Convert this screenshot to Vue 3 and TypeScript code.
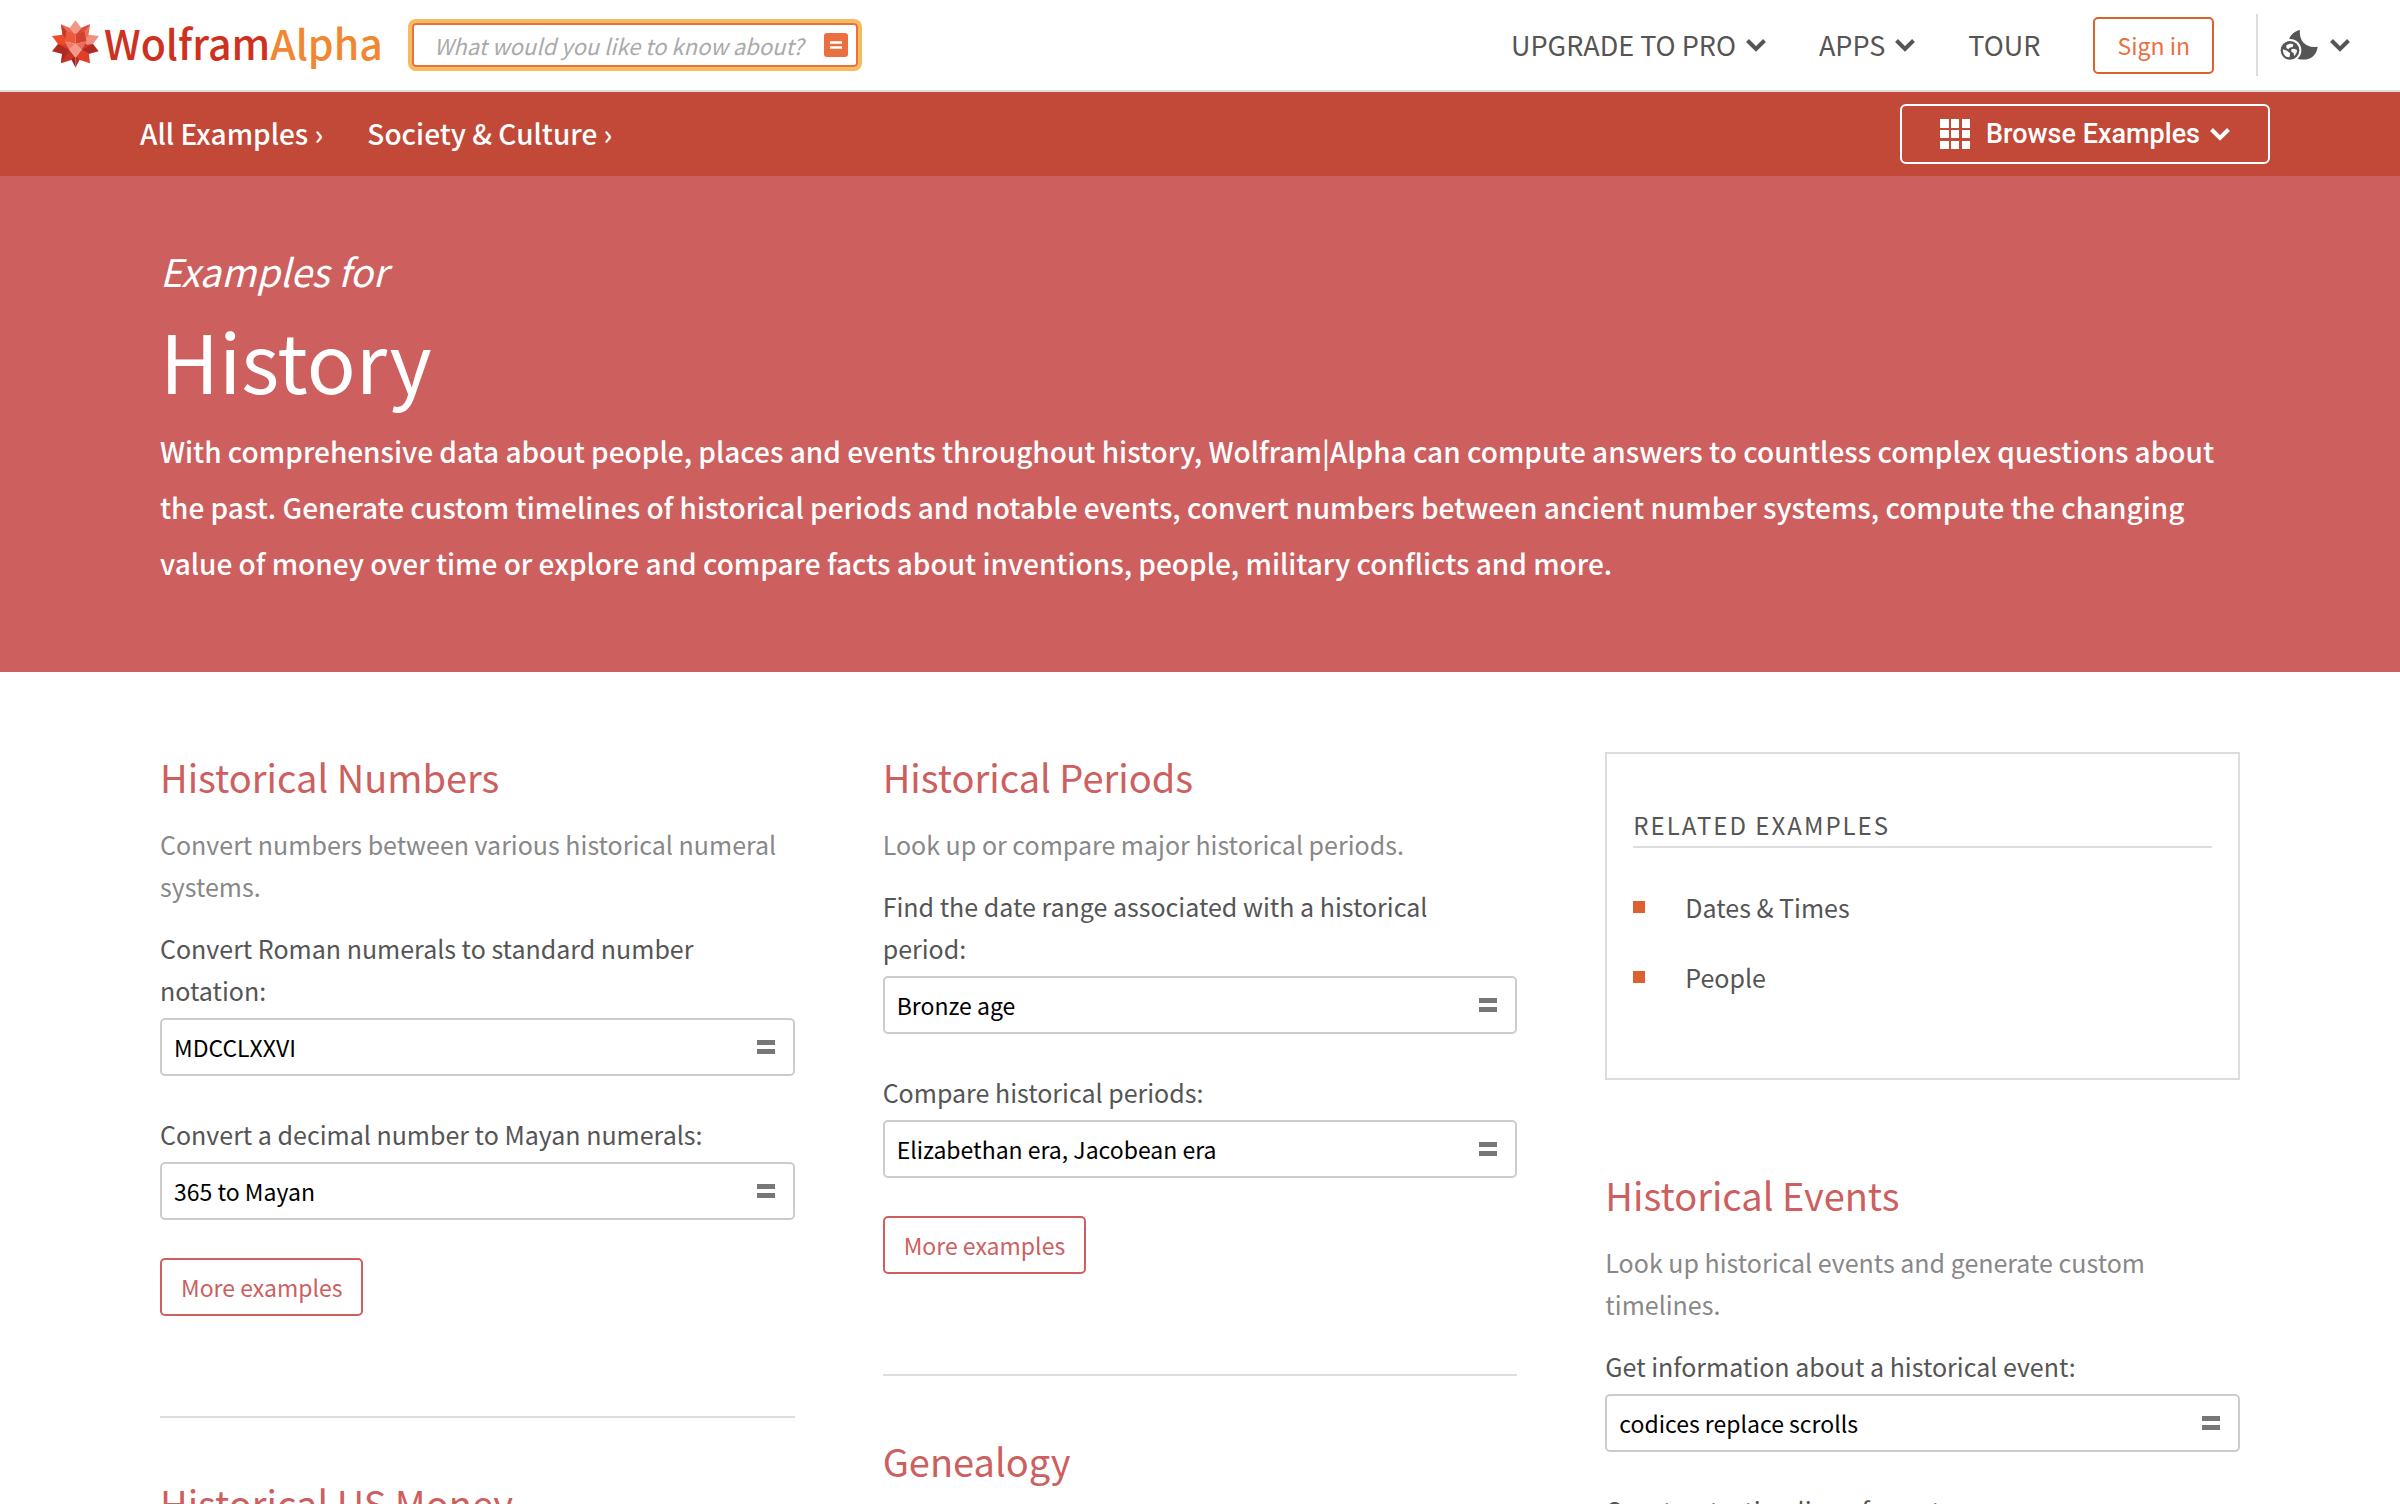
<script setup lang="ts">
import { ref } from 'vue'

interface Example {
  id: string
  label: string
  query: string
}

interface Topic {
  title: string
  summary?: string
  examples: Example[]
  more: boolean
}

const search = ref('')

const crumbs: string[] = ['All Examples', 'Society & Culture']

const related: string[] = ['Dates & Times', 'People']

const numbers: Topic[] = [
  {
    title: 'Historical Numbers',
    summary: 'Convert numbers between various historical numeral systems.',
    examples: [
      { id: 'roman', label: 'Convert Roman numerals to standard number notation:', query: 'MDCCLXXVI' },
      { id: 'mayan', label: 'Convert a decimal number to Mayan numerals:', query: '365 to Mayan' },
    ],
    more: true,
  },
  { title: 'Historical US Money', examples: [], more: false },
]

const periods: Topic[] = [
  {
    title: 'Historical Periods',
    summary: 'Look up or compare major historical periods.',
    examples: [
      { id: 'bronze', label: 'Find the date range associated with a historical period:', query: 'Bronze age' },
      { id: 'eras', label: 'Compare historical periods:', query: 'Elizabethan era, Jacobean era' },
    ],
    more: true,
  },
  { title: 'Genealogy', examples: [], more: false },
]

const events: Topic[] = [
  {
    title: 'Historical Events',
    summary: 'Look up historical events and generate custom timelines.',
    examples: [
      { id: 'codices', label: 'Get information about a historical event:', query: 'codices replace scrolls' },
      { id: 'timeline', label: 'Construct a timeline of events:', query: '' },
    ],
    more: false,
  },
]

const columns = [
  { name: 'numbers', hasRelated: false, topics: numbers },
  { name: 'periods', hasRelated: false, topics: periods },
  { name: 'events', hasRelated: true, topics: events },
]
</script>

<template>
  <div class="page">
    <header class="header">
      <a class="brand" href="#" aria-label="WolframAlpha">
        <svg class="spikey" viewBox="66 60 142 144" aria-hidden="true">
          <polygon points="66,154 84,132 104,124 120,150 97,162" fill="#b02a24" />
          <polygon points="207,154 190,132 170,124 154,150 177,162" fill="#b02a24" />
          <polygon points="84,132 104,124 120,150" fill="#d6402f" />
          <polygon points="190,132 170,124 154,150" fill="#cf3a2c" />
          <polygon points="93,190 97,160 120,150 137,172 124,180" fill="#c93325" />
          <polygon points="93,190 97,160 120,150" fill="#a92a26" />
          <polygon points="181,190 177,160 154,150 137,172 150,180" fill="#df3f26" />
          <polygon points="137,204 124,178 137,168" fill="#9d2522" />
          <polygon points="137,204 150,178 137,168" fill="#bc2d25" />
          <polygon points="66,108 98,104 112,120 104,134 84,132" fill="#ef4a2c" />
          <polygon points="208,108 176,104 162,120 170,134 190,132" fill="#f08f7e" />
          <polygon points="93,72 120,84 137,104 110,120 98,106" fill="#ec6650" />
          <polygon points="93,72 110,94 110,120 98,106" fill="#c8382c" />
          <polygon points="181,72 154,84 137,104 164,120 176,106" fill="#ec6f5b" />
          <polygon points="181,72 164,94 137,104 154,84" fill="#d94f3d" />
          <polygon points="137,60 119,84 137,104 155,84" fill="#f29886" />
          <polygon points="110,94 137,102 137,132 104,124" fill="#ee5838" />
          <polygon points="164,94 137,102 137,132 170,124" fill="#d3412f" />
          <polygon points="104,124 137,132 118,150" fill="#ee7c66" />
          <polygon points="170,124 137,132 156,150" fill="#ea6f59" />
          <polygon points="137,132 118,149 137,174 156,149" fill="#f29a8a" />
        </svg>
        <span class="wordmark">Wolfram<span class="wordmark-alpha">Alpha</span></span>
      </a>

      <form class="search" role="search" @submit.prevent>
        <input
          v-model="search"
          class="search-input"
          type="text"
          aria-label="Query"
          placeholder="What would you like to know about?"
        />
        <button class="search-go" type="submit" aria-label="Compute">
          <svg viewBox="0 0 24 24" aria-hidden="true">
            <rect width="24" height="24" rx="3" fill="#ea7041" />
            <path d="M6 9.500h12M6 14.500h12" stroke="#fff" stroke-width="2.500" />
          </svg>
        </button>
      </form>

      <nav class="nav" aria-label="Main">
        <button class="nav-item" type="button">
          UPGRADE TO PRO
          <svg class="chevron" viewBox="0 0 20 13" aria-hidden="true"><path d="M1.500 1.500 10 10l8.500-8.500" /></svg>
        </button>
        <button class="nav-item" type="button">
          APPS
          <svg class="chevron" viewBox="0 0 20 13" aria-hidden="true"><path d="M1.500 1.500 10 10l8.500-8.500" /></svg>
        </button>
        <a class="nav-item" href="#">TOUR</a>
        <button class="sign-in" type="button">Sign in</button>
      </nav>

      <button class="theme" type="button" aria-label="Theme and language">
        <svg class="theme-icon" viewBox="1203 90 112 90" aria-hidden="true">
          <path
            d="M1262 90c-18 4-30 15-34 32l20 50 8 5c34 7 56-9 59-37-36 6-57-18-53-50z"
            fill="#555"
          />
          <circle cx="1232" cy="151" r="34" fill="#fff" />
          <circle cx="1232" cy="151" r="28" fill="#555" />
          <path
            d="M1211 148c5 2 12 3 15 7l6 4-1 13c-12 1-22-11-20-24zM1221 136c7-5 15-6 21-3l-1 7-10 3-4 5-6-4zM1236 148l8-2 9 4c0 8-4 15-9 18l-1-9-7-4z"
            fill="#fff"
          />
        </svg>
        <svg class="chevron" viewBox="0 0 20 13" aria-hidden="true"><path d="M1.500 1.500 10 10l8.500-8.500" /></svg>
      </button>
    </header>

    <div class="bar">
      <nav class="crumbs" aria-label="Breadcrumb">
        <a v-for="crumb in crumbs" :key="crumb" href="#">{{ crumb }} ›</a>
      </nav>
      <button class="browse" type="button">
        <svg class="grid-icon" viewBox="0 0 30 30" aria-hidden="true">
          <path d="M0 0h9v9H0zM11 0h8v9h-8zM22 0h8v9h-8zM0 11h9v8H0zM11 11h8v8h-8zM22 11h8v8h-8zM0 22h9v8H0zM11 22h8v8h-8zM22 22h8v8h-8z" />
        </svg>
        Browse Examples
        <svg class="chevron" viewBox="0 0 20 13" aria-hidden="true"><path d="M1.500 1.500 10 10l8.500-8.500" /></svg>
      </button>
    </div>

    <section class="hero">
      <p class="hero-kicker">Examples for</p>
      <h1 class="hero-title">History</h1>
      <p class="hero-text">
        With comprehensive data about people, places and events throughout history, Wolfram|Alpha can compute
        answers to countless complex questions about the past. Generate custom timelines of historical periods and
        notable events, convert numbers between ancient number systems, compute the changing value of money over
        time or explore and compare facts about inventions, people, military conflicts and more.
      </p>
    </section>

    <main class="columns">
      <div v-for="column in columns" :key="column.name" class="column">
        <aside v-if="column.hasRelated" class="related">
          <h2 class="related-title">RELATED EXAMPLES</h2>
          <ul class="related-list">
            <li v-for="item in related" :key="item" class="related-item">
              <a href="#">{{ item }}</a>
            </li>
          </ul>
        </aside>

        <section v-for="topic in column.topics" :key="topic.title" class="topic">
          <h2 class="topic-title"><a href="#">{{ topic.title }}</a></h2>
          <p v-if="topic.summary" class="topic-summary">{{ topic.summary }}</p>
          <form v-for="example in topic.examples" :key="example.id" class="example" @submit.prevent>
            <label class="example-label" :for="example.id">{{ example.label }}</label>
            <div class="example-box">
              <input :id="example.id" class="example-input" type="text" :value="example.query" />
              <button class="example-go" type="submit" aria-label="Compute">
                <svg viewBox="0 0 18 14" aria-hidden="true"><path d="M0 0h18v5H0zM0 9h18v5H0z" /></svg>
              </button>
            </div>
          </form>
          <button v-if="topic.more" class="more" type="button">More examples</button>
        </section>
      </div>
    </main>
  </div>
</template>

<style>
body {
  margin: 0;
  background: #fff;
}
</style>

<style scoped>
.page {
  height: 100vh;
  overflow-y: auto;
  scrollbar-width: none;
  color: #555;
  font-family: 'Noto Sans CJK SC', 'Noto Sans', sans-serif;
  font-size: 25px;
  line-height: 42px;
}

.page * {
  box-sizing: border-box;
}

h1,
h2,
p,
ul {
  margin: 0;
  padding: 0;
  font-weight: 400;
}

a {
  color: inherit;
  text-decoration: none;
}

button,
input {
  margin: 0;
  padding: 0;
  border: 0;
  background: none;
  color: inherit;
  font: inherit;
}

svg {
  display: block;
}

.chevron {
  width: 20px;
  height: 13px;
  fill: none;
  stroke: currentColor;
  stroke-width: 4;
}

/* Header */
.header {
  display: flex;
  align-items: center;
  height: 92px;
  padding: 0 50px 0 52px;
  border-bottom: 2px solid #ddd;
}

.brand {
  display: flex;
  align-items: center;
  gap: 5px;
  width: 360px;
  padding-bottom: 2px;
}

.spikey {
  width: 47px;
  height: 48px;
}

.wordmark {
  padding-bottom: 4px;
  color: #cf3120;
  font-size: 41px;
  font-weight: 500;
  line-height: 60px;
}

.wordmark-alpha {
  color: #f18733;
}

.search {
  display: flex;
  align-items: center;
  width: 446px;
  height: 44px;
  padding: 0 8px 0 20px;
  border: 2px solid #ea7041;
  border-radius: 4px;
  box-shadow: 0 0 0 4px #f5bb5e;
}

.search-input {
  flex: 1;
  min-width: 0;
  height: 40px;
  outline: none;
  color: #000;
  font-size: 22px;
}

.search-input::placeholder {
  color: #aaa;
  font-style: italic;
}

.search-go {
  width: 24px;
  height: 24px;
}

.nav {
  display: flex;
  align-items: center;
  gap: 53px;
  margin-left: auto;
}

.nav-item {
  display: flex;
  align-items: center;
  gap: 10px;
  font-size: 27px;
}

.sign-in {
  height: 57px;
  padding: 0 22px;
  border: 2px solid #d9622f;
  border-radius: 5px;
  color: #ea7041;
  font-size: 23px;
}

.theme {
  display: flex;
  align-items: center;
  gap: 12px;
  height: 62px;
  margin-left: 42px;
  padding-left: 22px;
  border-left: 2px solid #ddd;
}

.theme-icon {
  width: 38px;
  height: 30px;
}

/* Breadcrumb bar */
.bar {
  display: flex;
  align-items: center;
  justify-content: space-between;
  height: 84px;
  padding: 0 130px 0 140px;
  background: #c24838;
  color: #fff;
}

.crumbs {
  display: flex;
  gap: 44px;
  padding-bottom: 2px;
  font-size: 28px;
  font-weight: 500;
}

.browse {
  display: flex;
  align-items: center;
  height: 60px;
  padding: 0 38px;
  border: 2px solid #fff;
  border-radius: 6px;
  font-family: Roboto, sans-serif;
  font-size: 27px;
  font-weight: 500;
}

.grid-icon {
  width: 30px;
  height: 30px;
  margin-right: 16px;
  fill: #fff;
}

.browse .chevron {
  margin-left: 10px;
}

/* Hero */
.hero {
  padding: 67px 160px 81px;
  background: #cd5f5f;
  color: #fff;
}

.hero-kicker {
  font-size: 38px;
  font-style: italic;
  line-height: 56px;
}

.hero-title {
  font-size: 81px;
  line-height: 120px;
}

.hero-text {
  margin-top: 4px;
  font-size: 28px;
  font-weight: 500;
  line-height: 56px;
}

/* Topic columns */
.columns {
  display: grid;
  grid-template-columns: repeat(3, 1fr);
  column-gap: 88px;
  padding: 80px 160px;
}

.topic + .topic {
  margin-top: 100px;
  padding-top: 60px;
  border-top: 2px solid #ddd;
}

.topic-title {
  color: #cd5f5f;
  font-size: 38px;
  line-height: 50px;
}

.topic-summary {
  margin: 21px 0 20px;
  color: #888;
}

.example + .example {
  margin-top: 37px;
}

.example-label {
  display: block;
  padding-right: 10px;
}

.example-box {
  display: flex;
  align-items: center;
  height: 58px;
  margin-top: 7px;
  padding: 0 18px 0 12px;
  border: 2px solid #ccc;
  border-radius: 5px;
}

.example-input {
  flex: 1;
  min-width: 0;
  height: 54px;
  color: #000;
  font-size: 23px;
}

.example-go {
  width: 18px;
  height: 14px;
  fill: #777;
}

.more {
  height: 58px;
  margin-top: 38px;
  padding: 0 19px;
  border: 2px solid #cd5f5f;
  border-radius: 5px;
  color: #cd5f5f;
  font-size: 23px;
}

/* Related examples */
.related {
  margin-bottom: 90px;
  padding: 50px 26px 80px;
  border: 2px solid #ddd;
}

.related-title {
  border-bottom: 2px solid #ddd;
  font-size: 24px;
  letter-spacing: 2px;
}

.related-list {
  display: flex;
  flex-direction: column;
  gap: 28px;
  margin-top: 38px;
  list-style: none;
}

.related-item {
  display: flex;
  align-items: center;
  gap: 40px;
}

.related-item::before {
  width: 12px;
  height: 12px;
  background: #dd6031;
  content: '';
}
</style>
